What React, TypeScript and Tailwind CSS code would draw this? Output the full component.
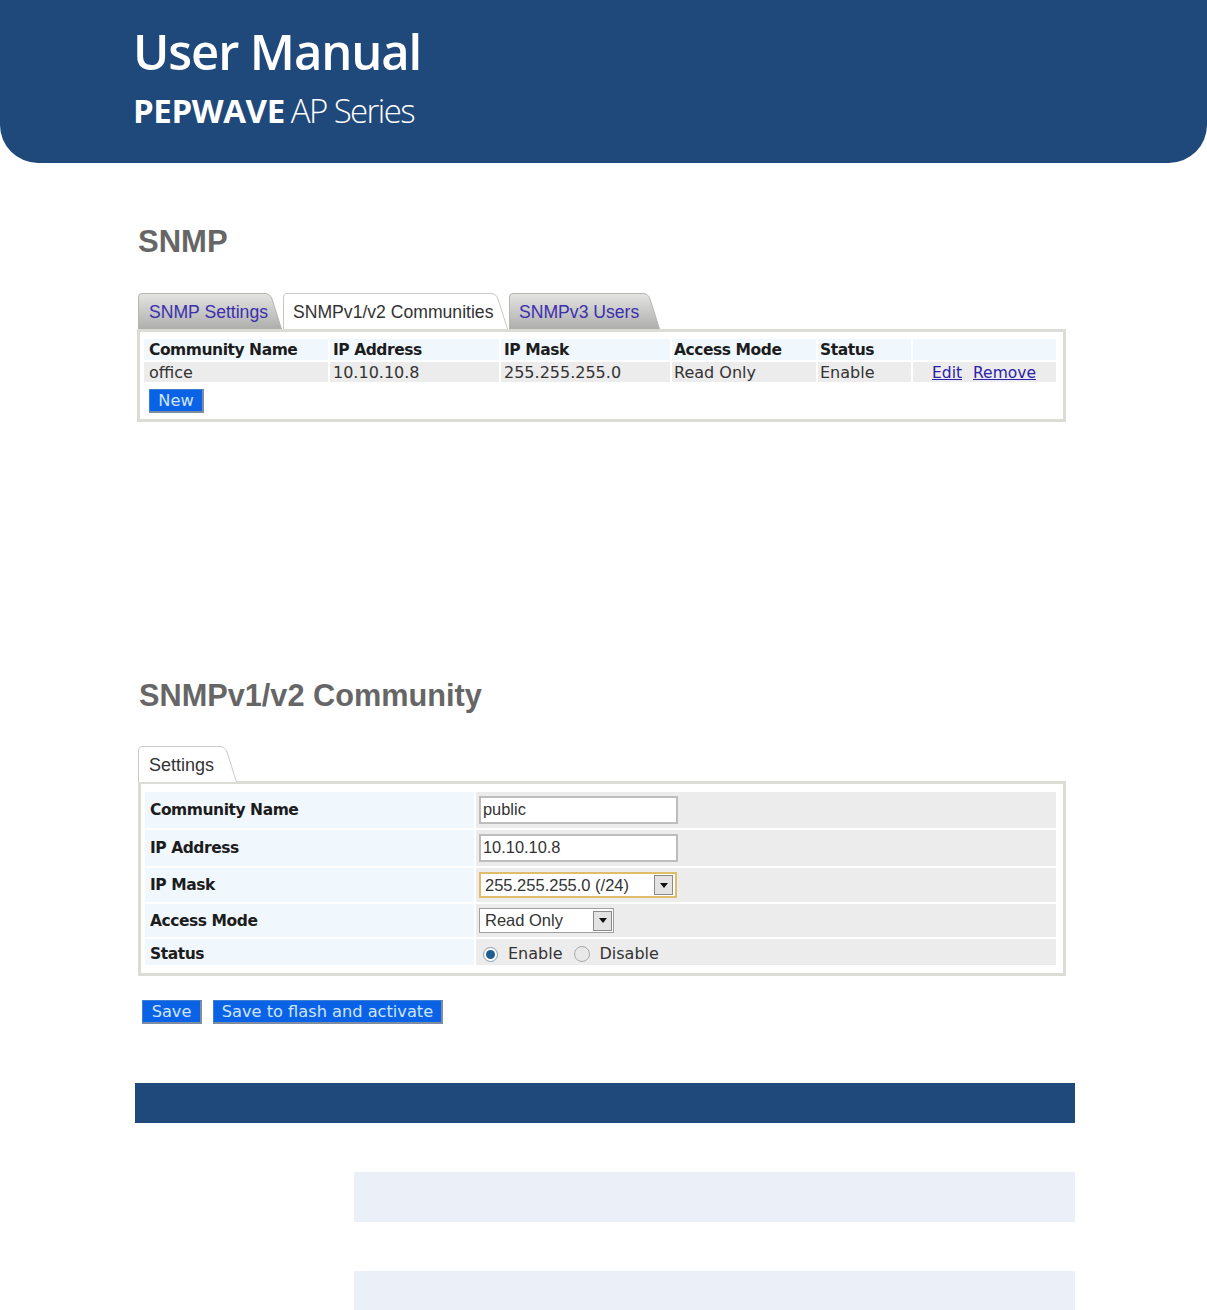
const sans = "font-['Liberation_Sans',Arial,sans-serif]";
const verdana = "font-['DejaVu_Sans',Verdana,sans-serif]";

function Tab({ label, active, w, width, textClass }: { label: string; active?: boolean; w: number; width: string; textClass: string }) {
  return (
    <div className={`relative h-[36px] ${width} ${active ? "z-10" : ""}`}>
      <svg className="absolute inset-0 h-full w-full" viewBox={`0 0 ${w} 36`}>
        <defs>
          <linearGradient id="tabGrey" x1="0" y1="0" x2="0" y2="1">
            <stop offset="0" stopColor="#e4e4e2" />
            <stop offset="1" stopColor="#aeaeac" />
          </linearGradient>
        </defs>
        <path
          d={`M0.5 36V4Q0.5 0.5 4 0.5H${w - 17}Q${w - 12} 0.5 ${w - 10} 6L${w - 0.5} 36`}
          fill={active ? "#ffffff" : "url(#tabGrey)"}
          stroke={active ? "#c9c9c5" : "#b4b4b0"}
        />
      </svg>
      <span
        className={`absolute top-[7px] whitespace-nowrap leading-[24px] ${textClass} ${sans} ${active ? "text-[#333]" : "text-[#3b2fb0]"}`}
      >
        {label}
      </span>
    </div>
  );
}

function BlueButton({ children, width }: { children: string; width: string }) {
  return (
    <div className={`flex h-[24px] items-center justify-center border border-b-2 border-r-2 border-t-[#3f7fd0] border-l-[#3f7fd0] border-b-[#7d8ea3] border-r-[#7d8ea3] bg-[#0a63e6] pt-[1px] text-[16.2px] text-[#cfe4ff] ${width} ${verdana}`}>
      {children}
    </div>
  );
}

function Row({ label, height, labelPad = "pt-[2px]", children }: { label: string; height: string; labelPad?: string; children: React.ReactNode }) {
  return (
    <div className={`flex gap-[2px] ${height}`}>
      <div className={`flex w-[329px] items-center bg-[#f0f7fd] pl-[5px] text-[15.5px] font-bold tracking-[-0.45px] text-[#1c1c1c] ${labelPad} ${verdana}`}>{label}</div>
      <div className="flex flex-1 items-center bg-[#ececec] pl-[3px]">{children}</div>
    </div>
  );
}

function TextBox({ value }: { value: string }) {
  return (
    <div className={`flex h-[28px] w-[199px] items-center border-2 border-[#bdbdbd] bg-white pb-[1px] pl-[2px] text-[16.4px] text-[#333] ${sans}`}>
      {value}
    </div>
  );
}

function Arrow() {
  return (
    <div className="flex h-[20px] w-[19px] items-center justify-center border border-[#8a8a8a] bg-[#e3e3e3]">
      <div className="h-0 w-0 border-x-[4px] border-t-[5px] border-x-transparent border-t-[#111]" />
    </div>
  );
}

export default function App() {
  const cols = [
    { name: "Community Name", value: "office", w: "w-[184px] pl-[5px]" },
    { name: "IP Address", value: "10.10.10.8", w: "w-[169px] pl-[3px]" },
    { name: "IP Mask", value: "255.255.255.0", w: "w-[169px] pl-[3px]" },
    { name: "Access Mode", value: "Read Only", w: "w-[144px] pl-[2px]" },
    { name: "Status", value: "Enable", w: "w-[93px] pl-[2px]" },
  ];

  return (
    <div className="h-[1310px] w-[1207px] overflow-hidden bg-white">
      <header className="h-[163px] rounded-b-[38px] bg-[#1f487b] pl-[133px] pt-[21px] text-white font-['Open_Sans',sans-serif]">
        <div className="text-[49px] font-semibold leading-[60px] tracking-[-1.1px]">User Manual</div>
        <div className="mt-[7px] flex items-baseline text-[33px] leading-[46px]">
          <span className="font-bold tracking-[-0.4px]">PEPWAVE</span>
          <span className="ml-[6px] font-light tracking-[-1.6px]">AP Series</span>
        </div>
      </header>

      <section className="pl-[137px] pt-[61px]">
        <h1 className={`pl-[1px] text-[31px] font-bold leading-[36px] text-[#666] ${sans}`}>SNMP</h1>
        <div className="mt-[33px] flex gap-[1px] pl-[1px]">
          <Tab label="SNMP Settings" w={144} width="w-[144px]" textClass="left-[11px] text-[17.6px]" />
          <Tab label="SNMPv1/v2 Communities" active w={225} width="w-[225px]" textClass="left-[10px] text-[17.6px]" />
          <Tab label="SNMPv3 Users" w={151} width="w-[151px]" textClass="left-[10px] text-[17.6px]" />
        </div>
        <div className="h-[93px] w-[929px] border-[3px] border-[#dcdcd6] bg-white pl-[4px] pt-[7px]">
          <div className={`flex h-[21px] gap-[2px] text-[15.5px] font-bold leading-[23px] tracking-[-0.45px] text-[#1c1c1c] ${verdana}`}>
            {cols.map((c) => (
              <div key={c.name} className={`${c.w} bg-[#f0f7fd]`}>{c.name}</div>
            ))}
            <div className="w-[143px] bg-[#f0f7fd]" />
          </div>
          <div className={`mt-[2px] flex h-[20px] gap-[2px] text-[16px] leading-[22px] text-[#333] ${verdana}`}>
            {cols.map((c) => (
              <div key={c.name} className={`${c.w} bg-[#ececec]`}>{c.value}</div>
            ))}
            <div className="flex w-[143px] gap-[11px] bg-[#ececec] pl-[19px] text-[15.5px] text-[#2c22a8] underline">
              <span>Edit</span>
              <span>Remove</span>
            </div>
          </div>
          <div className="ml-[5px] mt-[7px]">
            <BlueButton width="w-[55px]">New</BlueButton>
          </div>
        </div>
      </section>

      <section className="pl-[138px] pt-[256px]">
        <h1 className={`pl-[1px] text-[30.7px] font-bold leading-[36px] text-[#666] ${sans}`}>SNMPv1/v2 Community</h1>
        <div className="mt-[32px] flex">
          <Tab label="Settings" active w={99} width="w-[99px]" textClass="left-[11px] text-[18px]" />
        </div>
        <div className="-mt-[1px] h-[195px] w-[928px] border-[3px] border-[#dcdcd6] bg-white pl-[4px] pt-[8px]">
          <div className="flex w-[911px] flex-col gap-[2px]">
            <Row label="Community Name" height="h-[36px]"><TextBox value="public" /></Row>
            <Row label="IP Address" height="h-[36px]"><TextBox value="10.10.10.8" /></Row>
            <Row label="IP Mask" height="h-[34px]">
              <div className={`flex h-[26px] w-[198px] items-center justify-between border-2 border-[#e0bd6a] bg-white pl-[4px] pr-[2px] text-[16.5px] text-[#333] ${sans}`}>
                255.255.255.0 (/24)
                <Arrow />
              </div>
            </Row>
            <Row label="Access Mode" height="h-[33px]">
              <div className={`flex h-[25px] w-[135px] items-center justify-between border border-[#a0a0a0] bg-white pl-[5px] pr-[1px] text-[16.5px] text-[#333] ${sans}`}>
                Read Only
                <Arrow />
              </div>
            </Row>
            <Row label="Status" height="h-[26px]" labelPad="pt-[5px]">
              <div className={`flex items-center pl-[4px] pt-[4px] text-[16px] text-[#333] ${verdana}`}>
                <div className="flex h-[15px] w-[15px] items-center justify-center rounded-full border border-[#8a9bb0] bg-white">
                  <div className="h-[9px] w-[9px] rounded-full bg-[#1f5f8f]" />
                </div>
                <span className="ml-[10px]">Enable</span>
                <div className="ml-[11px] h-[16px] w-[16px] rounded-full border border-[#aaa] bg-[#e8e8e8]" />
                <span className="ml-[10px]">Disable</span>
              </div>
            </Row>
          </div>
        </div>
        <div className="ml-[4px] mt-[24px] flex gap-[11px]">
          <BlueButton width="w-[60px]">Save</BlueButton>
          <BlueButton width="w-[230px]">Save to flash and activate</BlueButton>
        </div>
      </section>

      <section className="ml-[135px] mt-[59px] w-[940px]">
        <div className="h-[40px] bg-[#1f487b]" />
        <div className="ml-[219px] mt-[49px] h-[50px] bg-[#ebeff7]" />
        <div className="ml-[219px] mt-[49px] h-[39px] bg-[#ebeff7]" />
      </section>
    </div>
  );
}
